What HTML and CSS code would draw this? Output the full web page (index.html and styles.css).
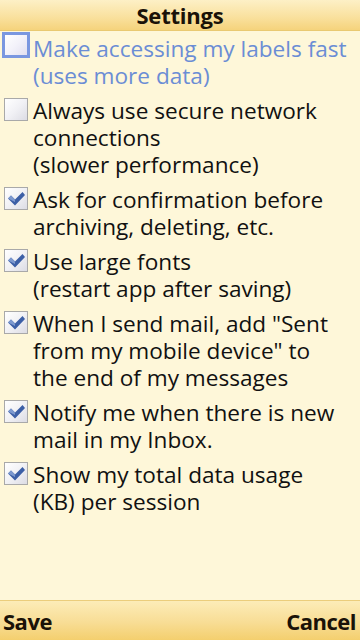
FILE: index.html
```html
<!DOCTYPE html>
<html>
<head>
<meta charset="utf-8">
<link rel="stylesheet" href="styles.css">
</head>
<body>
<div class="screen">
  <header class="titlebar">Settings</header>
  <main class="list">
    <div class="item focused">
      <span class="box"></span>
      <span class="label">Make accessing my labels fast<br>(uses more data)</span>
    </div>
    <div class="item">
      <span class="box"></span>
      <span class="label">Always use secure network<br>connections<br>(slower performance)</span>
    </div>
    <div class="item">
      <span class="box"><svg class="check" viewBox="0 0 24 22" width="24" height="22"><polygon points="4,10.5 7,7.5 11,11.5 18.5,4 21,7 11,17.5" fill="#3c5fa6"/><polygon points="4,10.5 7,7.5 11,11.5 11,14 " fill="#7d99cf"/></svg></span>
      <span class="label">Ask for confirmation before<br>archiving, deleting, etc.</span>
    </div>
    <div class="item">
      <span class="box"><svg class="check" viewBox="0 0 24 22" width="24" height="22"><polygon points="4,10.5 7,7.5 11,11.5 18.5,4 21,7 11,17.5" fill="#3c5fa6"/><polygon points="4,10.5 7,7.5 11,11.5 11,14 " fill="#7d99cf"/></svg></span>
      <span class="label">Use large fonts<br>(restart app after saving)</span>
    </div>
    <div class="item">
      <span class="box"><svg class="check" viewBox="0 0 24 22" width="24" height="22"><polygon points="4,10.5 7,7.5 11,11.5 18.5,4 21,7 11,17.5" fill="#3c5fa6"/><polygon points="4,10.5 7,7.5 11,11.5 11,14 " fill="#7d99cf"/></svg></span>
      <span class="label">When I send mail, add "Sent<br>from my mobile device" to<br>the end of my messages</span>
    </div>
    <div class="item">
      <span class="box"><svg class="check" viewBox="0 0 24 22" width="24" height="22"><polygon points="4,10.5 7,7.5 11,11.5 18.5,4 21,7 11,17.5" fill="#3c5fa6"/><polygon points="4,10.5 7,7.5 11,11.5 11,14 " fill="#7d99cf"/></svg></span>
      <span class="label">Notify me when there is new<br>mail in my Inbox.</span>
    </div>
    <div class="item">
      <span class="box"><svg class="check" viewBox="0 0 24 22" width="24" height="22"><polygon points="4,10.5 7,7.5 11,11.5 18.5,4 21,7 11,17.5" fill="#3c5fa6"/><polygon points="4,10.5 7,7.5 11,11.5 11,14 " fill="#7d99cf"/></svg></span>
      <span class="label">Show my total data usage<br>(KB) per session</span>
    </div>
  </main>
  <footer class="softkeys">
    <span class="softkey">Save</span>
    <span class="softkey">Cancel</span>
  </footer>
</div>
</body>
</html>
```
FILE: styles.css
```css
html, body {
  margin: 0;
  padding: 0;
}
body {
  font-family: "Open Sans", "Noto Sans", sans-serif;
  color: #111;
  background: #fef7d9;
}
.screen {
  width: 360px;
  height: 640px;
  display: flex;
  flex-direction: column;
  overflow: hidden;
  background: #fef7d9;
}
.titlebar {
  height: 30px;
  flex: 0 0 auto;
  border-bottom: 1px solid #e9c972;
  background: linear-gradient(#fdf0c6, #f9e09c 60%, #f5d37c);
  text-align: center;
  font-weight: 700;
  font-size: 22px;
  line-height: 31px;
  letter-spacing: -0.2px;
  color: #1a1208;
}
.list {
  flex: 1 1 auto;
  padding-top: 4px;
  display: flex;
  flex-direction: column;
  gap: 8px;
}
.item {
  display: flex;
  align-items: flex-start;
  font-size: 22.6px;
  line-height: 27px;
}
.label {
  white-space: nowrap;
  padding-left: 5px;
}
.box {
  flex: 0 0 auto;
  width: 22px;
  height: 21px;
  margin: 1px 0 0 4px;
  border: 1px solid #a9a9a9;
  background: linear-gradient(135deg, #ffffff, #f1f1f5 50%, #dcdce4);
  position: relative;
}
.check {
  position: absolute;
  left: -1px;
  top: 0;
}
.focused .box {
  width: 22px;
  height: 20px;
  margin: -3px 0 0 2px;
  border: 3px solid #7a97e0;
  background: linear-gradient(135deg, #ffffff, #f3f2fa 50%, #e2e0f0);
}
.focused .label {
  color: #6b8dd5;
  padding-left: 3px;
}
.softkeys {
  flex: 0 0 auto;
  height: 39px;
  border-top: 1px solid #ebcd7c;
  background: linear-gradient(#fcecb8, #f8dd95 55%, #f4cf6e);
  display: flex;
  justify-content: space-between;
  align-items: center;
  padding: 0 4px 0 3px;
  font-weight: 700;
  font-size: 22px;
  letter-spacing: -0.5px;
  color: #1a1208;
}
.softkey {
  line-height: 40px;
}
```
